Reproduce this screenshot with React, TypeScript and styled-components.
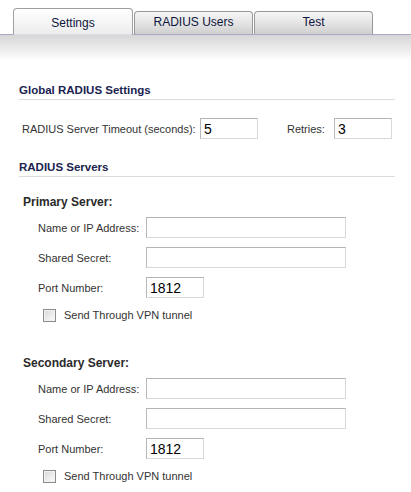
import React from "react";
import styled, { createGlobalStyle } from "styled-components";

const Global = createGlobalStyle`
  html, body { margin: 0; padding: 0; background: #fff; }
  body { font-family: "Liberation Sans", Arial, sans-serif; font-size: 11px; color: #333; }
  * { box-sizing: border-box; }
`;

const Page = styled.div`
  width: 411px;
  height: 492px;
  overflow: hidden;
  background: #fff;
`;

const TabBar = styled.div`
  display: flex;
  align-items: flex-end;
  gap: 1px;
  padding: 8px 0 0 13px;
  height: 35px;
  border-bottom: 1px solid #a9a9c6;
`;

const Tab = styled.div<{ $active?: boolean }>`
  width: ${(p) => (p.$active ? 120 : 119)}px;
  height: ${(p) => (p.$active ? 27 : 23)}px;
  margin-bottom: ${(p) => (p.$active ? -1 : 0)}px;
  border: 1px solid ${(p) => (p.$active ? "#a0a0a0" : "#999")};
  border-bottom: ${(p) => (p.$active ? "1px solid #dcdce8" : "none")};
  border-radius: 4px 4px 0 0;
  background: ${(p) =>
    p.$active
      ? "linear-gradient(#ffffff, #f4f4f4 60%, #ececec)"
      : "linear-gradient(#f6f6f6, #e2e2e2 55%, #cfcfcf)"};
  display: flex;
  justify-content: center;
  padding-top: ${(p) => (p.$active ? 7 : 3)}px;
  font-size: 12px;
  color: #0e1540;
  position: relative;
  z-index: ${(p) => (p.$active ? 1 : 0)};
`;

const Shade = styled.div`
  height: 26px;
  background: linear-gradient(#d6d6d6, #ececec 55%, #ffffff);
`;

const Content = styled.div`
  padding: 22px 16px 0 19px;
`;

const Heading = styled.div<{ $mt?: number }>`
  font-weight: bold;
  font-size: 11.5px;
  color: #1a2350;
  line-height: 14px;
  padding-bottom: 2px;
  border-bottom: 1px solid #dcdcdc;
  margin-top: ${(p) => p.$mt ?? 0}px;
`;

const TimeoutRow = styled.div`
  display: flex;
  align-items: center;
  margin-top: 18px;
  padding-left: 3px;
  height: 21px;
`;

const Label = styled.span<{ $w?: number; $ml?: number }>`
  font-size: 11px;
  color: #333;
  ${(p) => (p.$w ? `width: ${p.$w}px; flex: none;` : "")}
  margin-left: ${(p) => p.$ml ?? 0}px;
`;

const Input = styled.input<{ $w: number }>`
  width: ${(p) => p.$w}px;
  height: 21px;
  border: 1px solid #d8d8d8;
  border-top-color: #b4b4b4;
  border-left-color: #b8b8b8;
  background: #fff;
  font-family: "Liberation Sans", Arial, sans-serif;
  font-size: 14px;
  color: #000;
  padding: 0 0 0 3px;
  outline: none;
`;

const Server = styled.div<{ $mt: number }>`
  margin-top: ${(p) => p.$mt}px;
  padding-left: 4px;
`;

const ServerTitle = styled.div`
  font-weight: bold;
  font-size: 12px;
  color: #2a2a2a;
  line-height: 14px;
  margin-bottom: 8px;
`;

const Rows = styled.div`
  display: flex;
  flex-direction: column;
  gap: 9px;
  padding-left: 15px;
`;

const Row = styled.div`
  display: flex;
  align-items: center;
  height: 21px;
`;

const CheckRow = styled.label`
  display: flex;
  align-items: center;
  gap: 8px;
  margin-top: 1px;
  padding-left: 5px;
  height: 14px;
  font-size: 11px;
  color: #333;
`;

const Box = styled.span`
  width: 13px;
  height: 13px;
  border: 1px solid #8a8c8e;
  background: linear-gradient(135deg, #d6d6d6, #eeeeee 60%, #fafafa);
  box-shadow: inset 0 0 0 1px #f2f2f2;
  flex: none;
`;

const ServerBlock = ({ title, mt }: { title: string; mt: number }) => (
  <Server $mt={mt}>
    <ServerTitle>{title}</ServerTitle>
    <Rows>
      <Row>
        <Label $w={108}>Name or IP Address:</Label>
        <Input $w={200} defaultValue="" />
      </Row>
      <Row>
        <Label $w={108}>Shared Secret:</Label>
        <Input $w={200} defaultValue="" />
      </Row>
      <Row>
        <Label $w={108}>Port Number:</Label>
        <Input $w={58} defaultValue="1812" />
      </Row>
      <CheckRow>
        <Box />
        Send Through VPN tunnel
      </CheckRow>
    </Rows>
  </Server>
);

export default function App() {
  return (
    <Page>
      <Global />
      <TabBar>
        <Tab $active>Settings</Tab>
        <Tab>RADIUS Users</Tab>
        <Tab>Test</Tab>
      </TabBar>
      <Shade />
      <Content>
        <Heading>Global RADIUS Settings</Heading>
        <TimeoutRow>
          <Label $w={178}>RADIUS Server Timeout (seconds):</Label>
          <Input $w={58} defaultValue="5" />
          <Label $w={47} $ml={29}>Retries:</Label>
          <Input $w={58} defaultValue="3" />
        </TimeoutRow>
        <Heading $mt={21}>RADIUS Servers</Heading>
        <ServerBlock title="Primary Server:" mt={18} />
        <ServerBlock title="Secondary Server:" mt={34} />
      </Content>
    </Page>
  );
}
